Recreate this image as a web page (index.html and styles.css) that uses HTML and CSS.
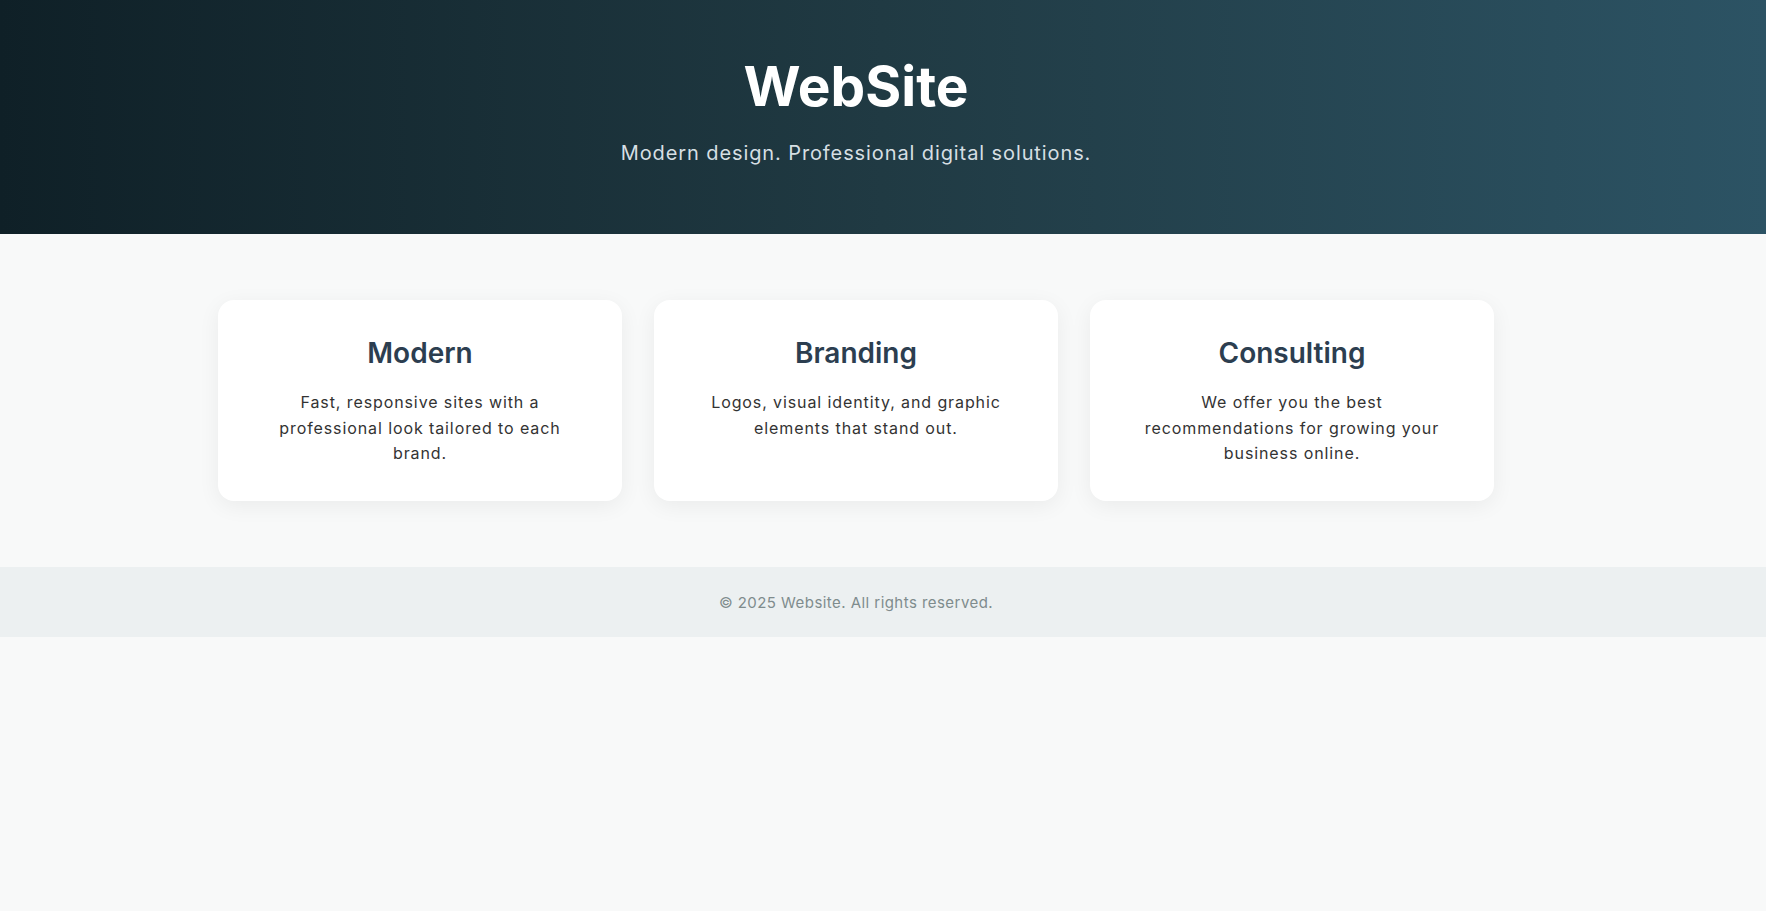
FILE: index.html
```html
<!DOCTYPE html>
<html lang="en">
<head>
<meta charset="utf-8">
<title>WebSite</title>
<link rel="stylesheet" href="styles.css">
</head>
<body>
<header class="hero">
  <h1 class="hero-title">WebSite</h1>
  <p class="hero-subtitle">Modern design. Professional digital solutions.</p>
</header>
<main class="services">
  <div class="card-grid">
    <section class="card">
      <h2 class="card-title">Modern</h2>
      <p class="card-text">Fast, responsive sites with a professional look tailored to each brand.</p>
    </section>
    <section class="card">
      <h2 class="card-title">Branding</h2>
      <p class="card-text">Logos, visual identity, and graphic elements that stand out.</p>
    </section>
    <section class="card">
      <h2 class="card-title">Consulting</h2>
      <p class="card-text">We offer you the best recommendations for growing your business online.</p>
    </section>
  </div>
</main>
<footer class="site-footer">
  <p class="footer-text">&copy; 2025 Website. All rights reserved.</p>
</footer>
</body>
</html>
```
FILE: styles.css
```css
* {
  box-sizing: border-box;
}

body {
  margin: 0;
  background: #f8f9f9;
  font-family: Inter, "Open Sans", "Liberation Sans", sans-serif;
  color: #333333;
}

.hero {
  background: linear-gradient(to right, #0f2027, #203a43, #2c5364);
  color: #ffffff;
  text-align: center;
  padding: 53px 74px 66px 20px;
}

.hero-title {
  margin: 0 0 19px;
  font-size: 55px;
  line-height: 66px;
  font-weight: 700;
}

.hero-subtitle {
  margin: 0;
  font-size: 20px;
  line-height: 30px;
  letter-spacing: 0.9px;
  color: #d6dfe3;
}

.services {
  padding: 66px 74px 66px 20px;
}

.card-grid {
  width: 1276px;
  margin: 0 auto;
  display: grid;
  grid-template-columns: repeat(3, 1fr);
  gap: 32px;
}

.card {
  background: #ffffff;
  border-radius: 16px;
  padding: 32px 40px 34px;
  text-align: center;
  box-shadow: 0 5px 22px rgba(0, 0, 0, 0.06);
}

.card-title {
  margin: 0 0 16px;
  font-size: 28px;
  line-height: 42px;
  font-weight: 600;
  color: #2c3e50;
}

.card-text {
  margin: 0;
  font-size: 16px;
  line-height: 25.6px;
  letter-spacing: 0.9px;
  color: #333333;
}

.site-footer {
  background: #ecf0f1;
  text-align: center;
  padding: 23px 74px 21px 20px;
}

.footer-text {
  margin: 0;
  font-size: 15px;
  line-height: 26px;
  letter-spacing: 0.45px;
  color: #7f8c8d;
}
```
